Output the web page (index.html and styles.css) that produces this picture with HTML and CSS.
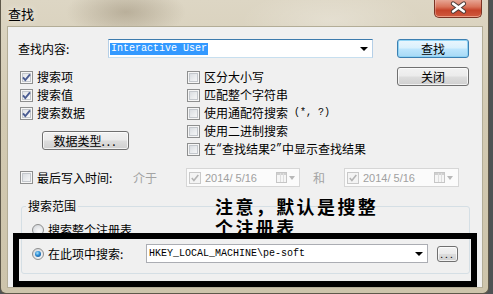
FILE: index.html
```html
<!DOCTYPE html>
<html lang="zh-CN">
<head>
    <meta charset="UTF-8">
    <title>查找</title>
    <link rel="stylesheet" href="styles.css">
</head>
<body>
    <div class="window">
        <div class="titlebar">
            <span class="title">查找</span>
            <span class="close">
                <svg width="48" height="18" viewBox="0 0 48 18">
                    <path d="M19.5 3.5 L30.5 11.5 M30.5 3.5 L19.5 11.5" stroke="#4a3a36" stroke-width="4.6" stroke-linecap="round"/>
                    <path d="M19.5 3.5 L30.5 11.5 M30.5 3.5 L19.5 11.5" stroke="#fff" stroke-width="2.6" stroke-linecap="round"/>
                </svg>
            </span>
        </div>
        <div class="client">
            <div class="row-find">
                <span class="find-label">查找内容:</span>
                <div class="combo find"><span class="sel">Interactive User</span><span class="arrow"></span></div>
                <button class="btn default">查找</button>
            </div>

            <div class="options">
                <div class="col-left">
                    <div class="check"><span class="cb on"><svg width="11" height="11" viewBox="0 0 11 11"><path d="M2 5.3 L4.3 8 L9 2.4" fill="none" stroke="#4a5c92" stroke-width="1.9"/></svg></span>搜索项</div>
                    <div class="check"><span class="cb on"><svg width="11" height="11" viewBox="0 0 11 11"><path d="M2 5.3 L4.3 8 L9 2.4" fill="none" stroke="#4a5c92" stroke-width="1.9"/></svg></span>搜索值</div>
                    <div class="check"><span class="cb on"><svg width="11" height="11" viewBox="0 0 11 11"><path d="M2 5.3 L4.3 8 L9 2.4" fill="none" stroke="#4a5c92" stroke-width="1.9"/></svg></span>搜索数据</div>
                    <button class="btn type-btn">数据类型<span class="dots">...</span></button>
                </div>
                <div class="col-mid">
                    <div class="check"><span class="cb"></span>区分大小写</div>
                    <div class="check"><span class="cb"></span>匹配整个字符串</div>
                    <div class="check"><span class="cb"></span>使用通配符搜索<span class="half"> (*, ?)</span></div>
                    <div class="check"><span class="cb"></span>使用二进制搜索</div>
                    <div class="check"><span class="cb"></span>在<span class="half">“</span>查找结果<span class="half">2”</span>中显示查找结果</div>
                </div>
                <div class="col-right">
                    <button class="btn">关闭</button>
                </div>
            </div>

            <div class="row-date">
                <span class="cb"></span>
                <span class="date-label">最后写入时间:</span>
                <span class="muted between">介于</span>
                <div class="picker">
                    <span class="pick-cb"><svg width="10" height="10" viewBox="0 0 10 10"><path d="M1.8 5 L3.9 7.5 L8.3 2" fill="none" stroke="#b4b4b4" stroke-width="1.6"/></svg></span>
                    <span class="pick-text">2014/ 5/16</span>
                    <span class="cal"></span>
                    <span class="pick-arrow"></span>
                </div>
                <span class="muted and">和</span>
                <div class="picker wide">
                    <span class="pick-cb"><svg width="10" height="10" viewBox="0 0 10 10"><path d="M1.8 5 L3.9 7.5 L8.3 2" fill="none" stroke="#b4b4b4" stroke-width="1.6"/></svg></span>
                    <span class="pick-text">2014/ 5/16</span>
                    <span class="cal"></span>
                    <span class="pick-arrow"></span>
                </div>
            </div>

            <fieldset class="scope">
                <legend>搜索范围</legend>
                <div class="radio-row"><span class="radio"></span>搜索整个注册表</div>
                <div class="radio-row second">
                    <span class="radio on"></span>
                    <span class="radio-label">在此项中搜索:</span>
                    <div class="combo path"><span class="path-text">HKEY_LOCAL_MACHINE\pe-soft</span><span class="arrow"></span></div>
                    <button class="btn browse"><span class="dots">...</span></button>
                </div>
            </fieldset>

            <div class="note">注意，默认是搜整<br>个注册表</div>
            <div class="mark"></div>
        </div>
    </div>
</body>
</html>
```

FILE: styles.css
```css
body {
    margin: 0;
    width: 493px;
    height: 294px;
    overflow: hidden;
    background-color: #4f5254;
    font-family: "Noto Sans CJK SC", "Noto Sans", sans-serif;
    font-size: 12px;
    color: #000;
}
.window {
    width: 489px;
    height: 294px;
    box-sizing: border-box;
    padding: 0 6px 0 7px;
    border: 1px solid #5e584a;
    border-top: none;
    border-radius: 0 0 6px 6px;
    background:
        radial-gradient(ellipse 60px 26px at 125px 12px, rgba(120, 105, 80, 0.35), transparent),
        radial-gradient(ellipse 90px 30px at 330px 20px, rgba(255, 255, 255, 0.25), transparent),
        linear-gradient(180deg, #ddd6c4 0%, #d3cab2 40%, #cdc4ab 100%);
}
.titlebar {
    height: 27px;
    display: flex;
    justify-content: space-between;
    align-items: flex-start;
}
.title {
    margin-top: 6px;
    font-size: 13px;
    line-height: 16px;
    text-shadow: 0 0 6px rgba(255, 255, 255, 0.9);
}
.close {
    width: 48px;
    height: 18px;
    box-sizing: border-box;
    border: 1px solid #7a3324;
    border-top: none;
    border-radius: 0 0 5px 5px;
    background: linear-gradient(180deg, #e7a594 0%, #d9735a 40%, #c5432a 60%, #cf5a3f 100%);
    box-shadow: inset 0 -1px 0 rgba(255, 200, 180, 0.6), inset 1px 0 0 rgba(255, 255, 255, 0.25);
    display: flex;
}
.close svg {
    margin-left: -1px;
}
.client {
    position: relative;
    height: 260px;
    box-sizing: border-box;
    padding-top: 12px;
    background-color: #f0f0f0;
    box-shadow: 0 0 0 1px #b3ad97;
}
.row-find {
    display: flex;
    align-items: center;
    height: 19px;
    padding-left: 10px;
}
.find-label {
    width: 90px;
    line-height: 16px;
}
.combo {
    position: relative;
    display: flex;
    align-items: center;
    height: 19px;
    box-sizing: border-box;
    border: 1px solid #abadb3;
    background-color: #fff;
}
.combo.find {
    width: 265px;
    padding-left: 1px;
    border-color: #3d7bad #b5cfe7 #c7dfef #b5cfe7;
}
.sel {
    padding: 0 1px;
    background-color: #3399ff;
    color: #fff;
    font: 10px/12px "Liberation Mono", monospace;
}
.arrow {
    margin-left: auto;
    margin-right: 4px;
    width: 0;
    height: 0;
    border-left: 4px solid transparent;
    border-right: 4px solid transparent;
    border-top: 4px solid #000;
}
.btn {
    box-sizing: border-box;
    width: 72px;
    height: 19px;
    padding: 0;
    border: 1px solid #707070;
    border-radius: 3px;
    background: linear-gradient(180deg, #f2f2f2 0%, #ebebeb 48%, #dddddd 52%, #cfcfcf 100%);
    box-shadow: inset 0 0 0 1px rgba(255, 255, 255, 0.7);
    font-family: inherit;
    font-size: 12px;
    line-height: 15px;
    color: #000;
}
.btn.default {
    border-color: #3c7fb1;
    background: linear-gradient(180deg, #eaf6fd 0%, #d9f0fc 48%, #bee6fd 52%, #a7d9f5 100%);
    box-shadow: inset 0 0 0 1px #8fd3f4;
}
.row-find .btn {
    margin-left: 24px;
}
.options {
    display: flex;
    margin-top: 9px;
}
.col-left {
    width: 179px;
    box-sizing: border-box;
    padding: 1px 0 0 12px;
}
.col-mid {
    width: 210px;
    padding-top: 1px;
}
.col-right {
    width: 72px;
}
.check {
    display: flex;
    align-items: center;
    height: 18px;
    line-height: 16px;
    white-space: pre;
}
.half {
    font: 10px/16px "Liberation Mono", monospace;
}
.cb {
    flex: none;
    width: 13px;
    height: 13px;
    box-sizing: border-box;
    margin-right: 4px;
    border: 1px solid #8e8f8f;
    background: linear-gradient(135deg, #d2d6db 0%, #eceef0 60%, #fafafa 100%);
    box-shadow: inset 0 0 0 1px #f6f6f6, inset 0 0 0 2px #c3c7cc;
}
.cb.on {
    background: linear-gradient(135deg, #dde0e5 0%, #f2f3f4 60%, #fcfcfc 100%);
}
.cb svg {
    display: block;
}
.type-btn {
    width: 87px;
    margin-top: 9px;
    margin-left: 22px;
}
.dots {
    letter-spacing: 2px;
}
.row-date {
    display: flex;
    align-items: center;
    height: 19px;
    margin-top: 10px;
    padding-left: 12px;
}
.date-label {
    width: 96px;
    line-height: 16px;
}
.muted {
    color: #a3a3a3;
    line-height: 16px;
}
.between {
    width: 53px;
}
.and {
    width: 31px;
    margin-left: 13px;
}
.picker {
    display: flex;
    align-items: center;
    width: 114px;
    height: 19px;
    box-sizing: border-box;
    padding-left: 2px;
    border: 1px solid #d6d6d6;
    background-color: #fbfbfb;
}
.picker.wide {
    width: 115px;
}
.pick-cb {
    width: 12px;
    height: 12px;
    box-sizing: border-box;
    border: 1px solid #c9c9c9;
    background-color: #f4f4f4;
    display: flex;
    align-items: center;
    justify-content: center;
}
.pick-text {
    margin-left: 4px;
    width: 71px;
    font: 11px/14px "Liberation Sans", sans-serif;
    color: #a0a0a0;
}
.cal {
    width: 11px;
    height: 11px;
    box-sizing: border-box;
    border: 1px solid #c6c6c6;
    background:
        linear-gradient(90deg, transparent 3px, #dedede 3px, #dedede 4px, transparent 4px, transparent 6px, #dedede 6px, #dedede 7px, transparent 7px),
        linear-gradient(180deg, #d0d0d0 0, #d0d0d0 2px, #f6f6f6 2px);
}
.pick-arrow {
    margin-left: 2px;
    width: 0;
    height: 0;
    border-left: 3.5px solid transparent;
    border-right: 3.5px solid transparent;
    border-top: 4px solid #b8b8b8;
}
.scope {
    width: 449px;
    box-sizing: border-box;
    min-width: 0;
    margin: 11px 0 0 13px;
    padding: 7px 10px 10px 10px;
    border: 1px solid #d5dfe5;
    border-radius: 3px;
}
.scope legend {
    height: 16px;
    margin-left: -6px;
    padding: 0 2px;
    line-height: 16px;
}
.radio-row {
    display: flex;
    align-items: center;
    height: 18px;
    line-height: 16px;
    white-space: nowrap;
}
.radio-row.second {
    height: 19px;
    margin-top: 5px;
}
.radio {
    flex: none;
    position: relative;
    width: 12px;
    height: 12px;
    box-sizing: border-box;
    margin-right: 4px;
    border: 1px solid #8e8f8f;
    border-radius: 50%;
    background: radial-gradient(circle at 60% 65%, #fbfbfb 0%, #e2e4e7 55%, #c9cdd2 100%);
}
.radio.on::after {
    content: "";
    position: absolute;
    left: 2px;
    top: 2px;
    width: 6px;
    height: 6px;
    border-radius: 50%;
    background: radial-gradient(circle at 40% 35%, #a6e2fb 0%, #2a8ad4 45%, #17477e 100%);
}
.radio-label {
    width: 98px;
}
.combo.path {
    width: 282px;
    padding-left: 2px;
}
.path-text {
    font: 10px/12px "Liberation Mono", monospace;
}
.btn.browse {
    width: 21px;
    height: 16px;
    margin-left: 9px;
    line-height: 10px;
    font-size: 10px;
}
.note {
    position: absolute;
    left: 207px;
    top: 171px;
    font-family: "Liberation Sans", "Noto Sans CJK SC", sans-serif;
    font-size: 18px;
    line-height: 21px;
    font-weight: bold;
    letter-spacing: 2.4px;
}
.mark {
    position: absolute;
    left: 5px;
    top: 206px;
    width: 464px;
    height: 54px;
    box-sizing: border-box;
    border: 6px solid #000;
}
```
